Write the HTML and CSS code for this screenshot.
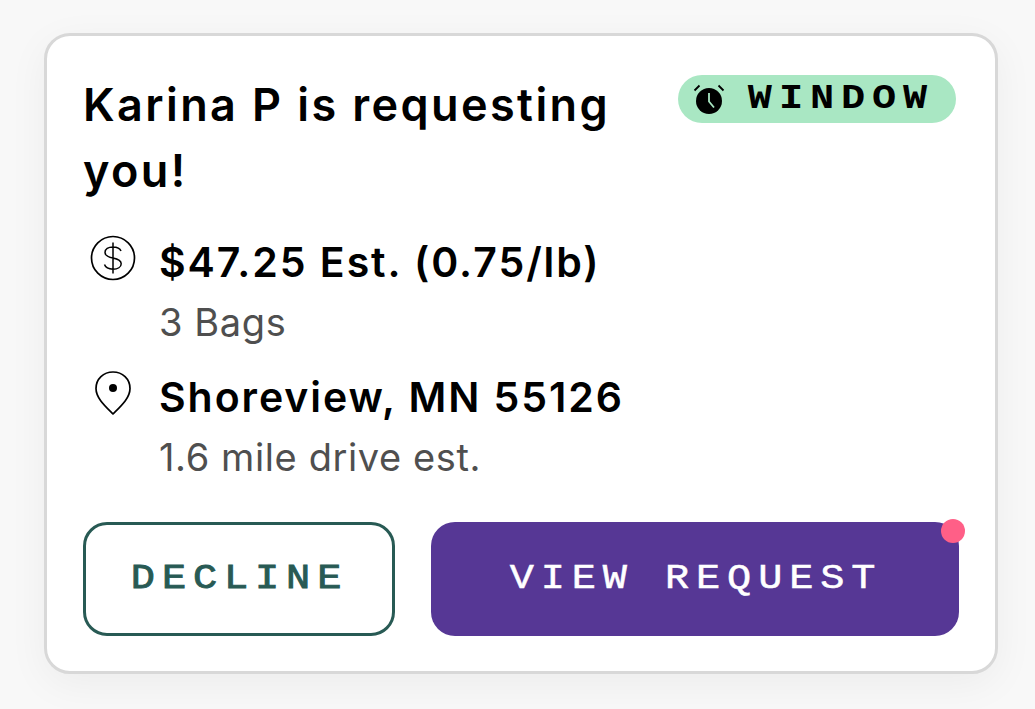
FILE: index.html
```html
<!DOCTYPE html>
<html lang="en">
<head>
  <meta charset="UTF-8">
  <meta name="viewport" content="width=device-width, initial-scale=1.0">
  <title>Request</title>
  <link rel="stylesheet" href="styles.css">
</head>
<body>
  <div class="card">
    <div class="card-header">
      <h1 class="card-title">Karina P is requesting you!</h1>
      <div class="badge">
        <svg class="badge-icon" viewBox="0 0 32 32" width="32" height="32">
          <circle cx="16" cy="18" r="13" fill="#000"/>
          <path d="M16 10v8.500l5 6" fill="none" stroke="#a9e7c3" stroke-width="1.800"/>
          <path d="M1.500 7.500 6.500 2.500M30.500 7.500 25.500 2.500" fill="none" stroke="#000" stroke-width="1.800"/>
        </svg>
        <span class="mono badge-text">WINDOW</span>
      </div>
    </div>

    <div class="info-row">
      <svg class="info-icon" viewBox="0 0 46 46" width="46" height="46">
        <circle cx="23" cy="23" r="21.500" fill="none" stroke="#000" stroke-width="1.700"/>
        <path d="M31 16c-1-2.600-4-4.100-8-4.100-4.700 0-8 2.200-8 5.500 0 3.600 3.400 4.700 8 5.600 4.800 1 8.200 2.200 8.200 5.700 0 3.400-3.500 5.500-8.200 5.500-4.300 0-7.500-1.600-8.500-4.600M23 7.500v31" fill="none" stroke="#000" stroke-width="1.500"/>
      </svg>
      <div class="info-text">
        <div class="info-main">$47.25 Est. (0.75/lb)</div>
        <div class="info-sub">3 Bags</div>
      </div>
    </div>

    <div class="info-row">
      <svg class="info-icon" viewBox="0 0 46 46" width="46" height="46">
        <path d="M23 44C15 36 6 28 6 18.500 6 9 13.500 2 23 2s17 7 17 16.500C40 28 31 36 23 44Z" fill="none" stroke="#000" stroke-width="1.700" stroke-linejoin="round"/>
        <circle cx="23" cy="18" r="4" fill="#000"/>
      </svg>
      <div class="info-text">
        <div class="info-main">Shoreview, MN 55126</div>
        <div class="info-sub">1.6 mile drive est.</div>
      </div>
    </div>

    <div class="actions">
      <button class="btn btn-decline"><span class="mono">DECLINE</span></button>
      <button class="btn btn-view"><span class="mono">VIEW REQUEST</span><span class="dot"></span></button>
    </div>
  </div>
</body>
</html>
```

FILE: styles.css
```css
* {
  box-sizing: border-box;
}

html, body {
  height: 100%;
}

body {
  margin: 0;
  padding: 33px 37px 35px 44px;
  background-color: #f8f8f8;
  font-family: Inter, 'Liberation Sans', sans-serif;
  color: #000;
  overflow: hidden;
}

.card {
  height: 641px;
  padding: 36px;
  background-color: #fff;
  border: 3px solid #d8d8d8;
  border-radius: 26px;
  box-shadow: 0 10px 40px rgba(0, 0, 0, 0.05);
}

.card-header {
  display: flex;
  justify-content: space-between;
  align-items: flex-start;
}

.card-title {
  width: 570px;
  margin: 0;
  font-size: 45px;
  line-height: 66px;
  font-weight: 600;
  letter-spacing: 2.4px;
}

.badge {
  display: flex;
  align-items: center;
  flex: none;
  width: 278px;
  height: 48px;
  margin: 3px 3px 0 0;
  padding-left: 15px;
  background-color: #a9e7c3;
  border-radius: 24px;
}

.badge-icon {
  flex: none;
}

/* the mono face in the design is wider than Liberation Mono */
.mono {
  display: inline-block;
  font-family: 'Liberation Mono', monospace;
  font-size: 35px;
  letter-spacing: 6px;
  line-height: 1;
  transform: scaleX(1.15);
}

.badge-text {
  margin-left: 35px;
  font-weight: 700;
}

.info-row {
  display: flex;
  align-items: flex-start;
  margin-top: 28px;
}

.info-row + .info-row {
  margin-top: 15px;
}

.info-icon {
  flex: none;
  margin: 3px 0 0 7px;
}

.info-text {
  margin-left: 23px;
}

.info-main {
  font-size: 41px;
  line-height: 60px;
  font-weight: 600;
  letter-spacing: 1.95px;
}

.info-sub {
  font-size: 38px;
  line-height: 60px;
  letter-spacing: 0.6px;
  color: #4f4f4f;
}

.actions {
  display: flex;
  gap: 36px;
  margin-top: 35px;
}

.btn {
  position: relative;
  height: 114px;
  padding: 0 0 0 2px;
  border-radius: 24px;
}

.btn-decline {
  width: 312px;
  background-color: #fff;
  border: 3px solid #285a54;
  color: #285a54;
  -webkit-text-stroke: 0.9px #285a54;
}

.btn-view {
  width: 528px;
  background-color: #563795;
  border: none;
  color: #fff;
  -webkit-text-stroke: 0.5px #fff;
}

.dot {
  position: absolute;
  top: -3px;
  right: -6px;
  width: 24px;
  height: 24px;
  background-color: #ff5f87;
  border-radius: 50%;
}
```
